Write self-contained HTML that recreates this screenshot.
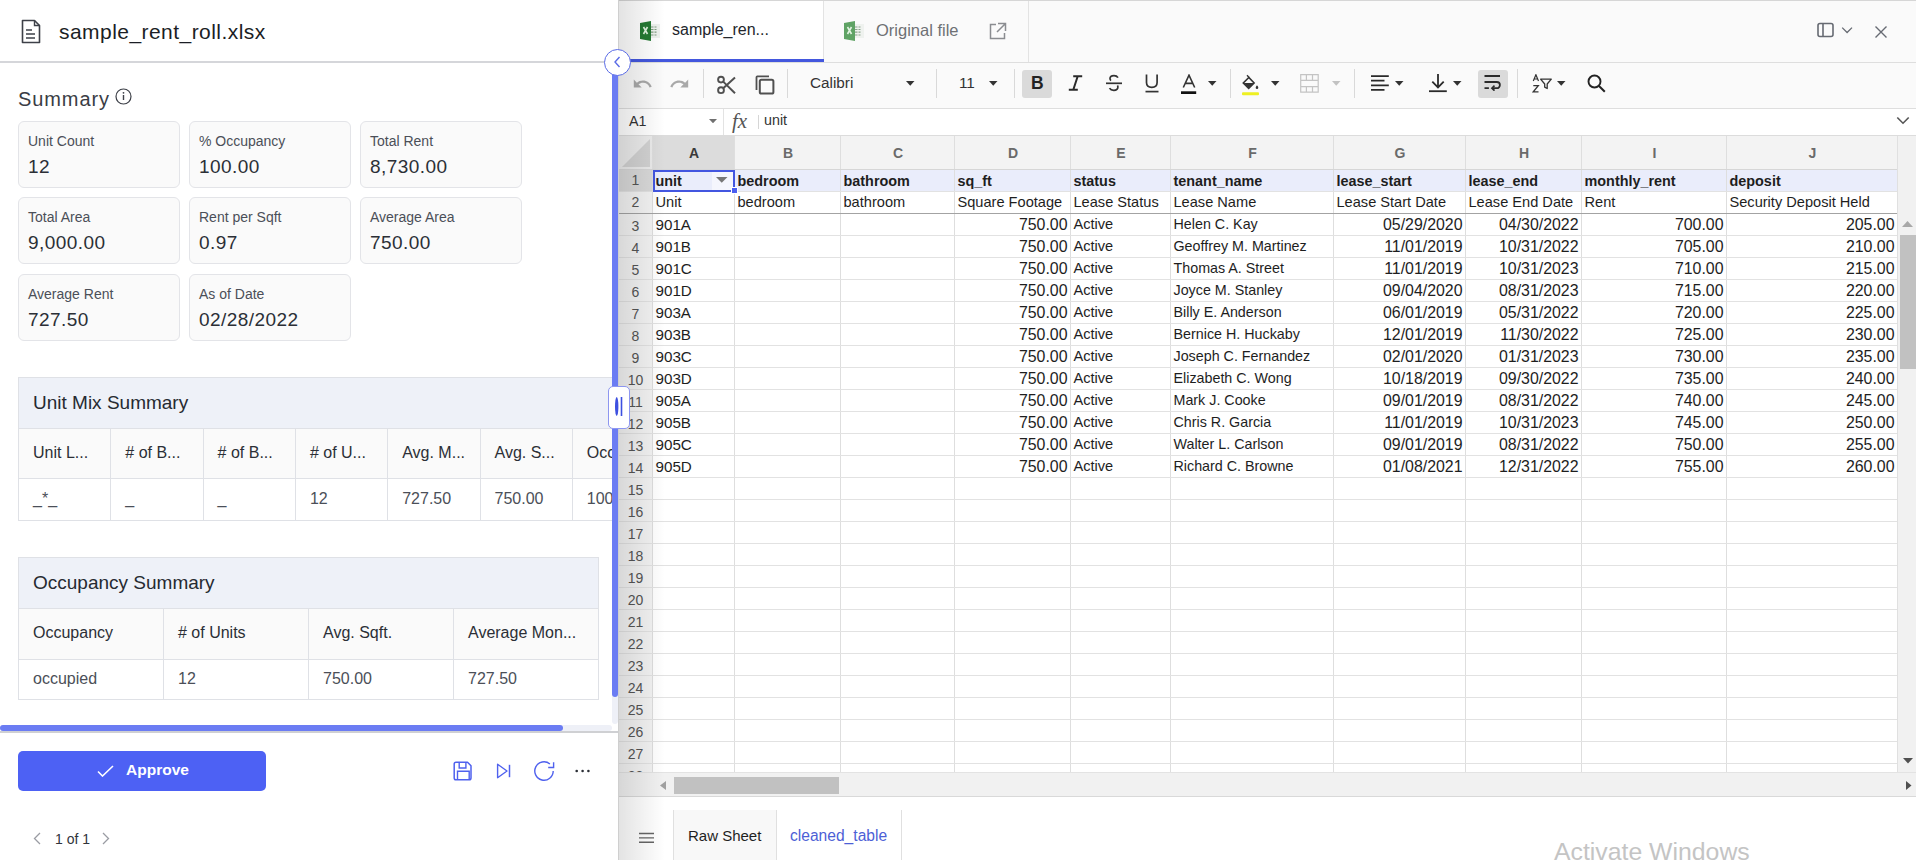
<!DOCTYPE html><html><head><meta charset="utf-8"><style>

*{box-sizing:border-box;margin:0;padding:0}
html,body{width:1916px;height:860px;overflow:hidden;background:#fff;font-family:"Liberation Sans",sans-serif;color:#1f2329}
.abs{position:absolute}
.t{position:absolute;white-space:nowrap}
.card{position:absolute;width:162px;height:67px;border:1px solid #e3e4e8;border-radius:6px;background:#fafafa}
.card .l{position:absolute;left:9px;top:11px;font-size:14px;color:#4b4f58;white-space:nowrap}
.card .v{position:absolute;left:9px;top:34px;font-size:19px;letter-spacing:0.45px;color:#2b2f36;white-space:nowrap}
.cell{position:absolute;white-space:nowrap;overflow:hidden;color:#222}

</style></head><body>
<div class="abs" style="left:0;top:0;width:612px;height:860px;background:#fff;overflow:hidden">
<svg class="abs" style="left:21px;top:19px" width="21" height="25" viewBox="0 0 21 25"><path d="M1.5 1.5h12l5 5v17h-17z" fill="none" stroke="#3d4048" stroke-width="1.6" stroke-linejoin="round"/><path d="M13.5 1.5v5h5" fill="none" stroke="#3d4048" stroke-width="1.4"/><path d="M5 11h6M5 15h9M5 19h9" stroke="#3d4048" stroke-width="1.4"/></svg>
<div class="t" style="left:59px;top:20px;font-size:21px;letter-spacing:0.45px;color:#1b1e25">sample_rent_roll.xlsx</div>
<div class="abs" style="left:0;top:61px;width:612px;height:2px;background:#d5d6da"></div>
<div class="t" style="left:18px;top:88px;font-size:20px;letter-spacing:0.9px;color:#3a3d45">Summary</div>
<svg class="abs" style="left:115px;top:88px" width="17" height="17" viewBox="0 0 17 17"><circle cx="8.5" cy="8.5" r="7.5" fill="none" stroke="#3d4048" stroke-width="1.2"/><path d="M8.5 7v5" stroke="#3d4048" stroke-width="1.4"/><circle cx="8.5" cy="4.8" r="0.9" fill="#3d4048"/></svg>
<div class="card" style="left:18px;top:121px"><div class="l">Unit Count</div><div class="v">12</div></div>
<div class="card" style="left:189px;top:121px"><div class="l">% Occupancy</div><div class="v">100.00</div></div>
<div class="card" style="left:360px;top:121px"><div class="l">Total Rent</div><div class="v">8,730.00</div></div>
<div class="card" style="left:18px;top:197px"><div class="l">Total Area</div><div class="v">9,000.00</div></div>
<div class="card" style="left:189px;top:197px"><div class="l">Rent per Sqft</div><div class="v">0.97</div></div>
<div class="card" style="left:360px;top:197px"><div class="l">Average Area</div><div class="v">750.00</div></div>
<div class="card" style="left:18px;top:274px"><div class="l">Average Rent</div><div class="v">727.50</div></div>
<div class="card" style="left:189px;top:274px"><div class="l">As of Date</div><div class="v">02/28/2022</div></div>
<div class="abs" style="left:18px;top:377px;width:620px;height:144px;border:1px solid #dfe1e6;background:#fff">
<div class="abs" style="left:0;top:0;width:620px;height:51px;background:#eef1f8;border-bottom:1px solid #dfe1e6"></div>
<div class="t" style="left:14px;top:14px;font-size:19px;color:#262a31">Unit Mix Summary</div>
<div class="abs" style="left:0;top:51px;width:620px;height:50px;background:#fafafa;border-bottom:1px solid #dfe1e6"></div>
<div class="t" style="left:14.0px;top:66px;font-size:16px;color:#2b2f36">Unit L...</div>
<div class="t" style="left:14.0px;top:112px;font-size:16px;color:#4b4f58">_*_</div>
<div class="abs" style="left:91.3px;top:51px;width:1px;height:92px;background:#dfe1e6"></div>
<div class="t" style="left:106.3px;top:66px;font-size:16px;color:#2b2f36"># of B...</div>
<div class="t" style="left:106.3px;top:112px;font-size:16px;color:#4b4f58">_</div>
<div class="abs" style="left:183.6px;top:51px;width:1px;height:92px;background:#dfe1e6"></div>
<div class="t" style="left:198.6px;top:66px;font-size:16px;color:#2b2f36"># of B...</div>
<div class="t" style="left:198.6px;top:112px;font-size:16px;color:#4b4f58">_</div>
<div class="abs" style="left:275.9px;top:51px;width:1px;height:92px;background:#dfe1e6"></div>
<div class="t" style="left:290.9px;top:66px;font-size:16px;color:#2b2f36"># of U...</div>
<div class="t" style="left:290.9px;top:112px;font-size:16px;color:#4b4f58">12</div>
<div class="abs" style="left:368.2px;top:51px;width:1px;height:92px;background:#dfe1e6"></div>
<div class="t" style="left:383.2px;top:66px;font-size:16px;color:#2b2f36">Avg. M...</div>
<div class="t" style="left:383.2px;top:112px;font-size:16px;color:#4b4f58">727.50</div>
<div class="abs" style="left:460.5px;top:51px;width:1px;height:92px;background:#dfe1e6"></div>
<div class="t" style="left:475.5px;top:66px;font-size:16px;color:#2b2f36">Avg. S...</div>
<div class="t" style="left:475.5px;top:112px;font-size:16px;color:#4b4f58">750.00</div>
<div class="abs" style="left:552.8px;top:51px;width:1px;height:92px;background:#dfe1e6"></div>
<div class="t" style="left:567.8px;top:66px;font-size:16px;color:#2b2f36">Occupancy</div>
<div class="t" style="left:567.8px;top:112px;font-size:16px;color:#4b4f58">100.00</div>
</div>
<div class="abs" style="left:18px;top:557px;width:581px;height:143px;border:1px solid #dfe1e6;background:#fff">
<div class="abs" style="left:0;top:0;width:579px;height:51px;background:#eef1f8;border-bottom:1px solid #dfe1e6"></div>
<div class="t" style="left:14px;top:14px;font-size:19px;color:#262a31">Occupancy Summary</div>
<div class="abs" style="left:0;top:51px;width:579px;height:51px;background:#fafafa;border-bottom:1px solid #dfe1e6"></div>
<div class="t" style="left:14px;top:66px;font-size:16px;color:#2b2f36">Occupancy</div>
<div class="t" style="left:14px;top:112px;font-size:16px;color:#4b4f58">occupied</div>
<div class="abs" style="left:144px;top:51px;width:1px;height:91px;background:#dfe1e6"></div>
<div class="t" style="left:159px;top:66px;font-size:16px;color:#2b2f36"># of Units</div>
<div class="t" style="left:159px;top:112px;font-size:16px;color:#4b4f58">12</div>
<div class="abs" style="left:289px;top:51px;width:1px;height:91px;background:#dfe1e6"></div>
<div class="t" style="left:304px;top:66px;font-size:16px;color:#2b2f36">Avg. Sqft.</div>
<div class="t" style="left:304px;top:112px;font-size:16px;color:#4b4f58">750.00</div>
<div class="abs" style="left:434px;top:51px;width:1px;height:91px;background:#dfe1e6"></div>
<div class="t" style="left:449px;top:66px;font-size:16px;color:#2b2f36">Average Mon...</div>
<div class="t" style="left:449px;top:112px;font-size:16px;color:#4b4f58">727.50</div>
</div>
<div class="abs" style="left:0;top:725px;width:612px;height:6px;background:#eef0f7;border-radius:3px"></div>
<div class="abs" style="left:0;top:725px;width:563px;height:6px;background:#6b7cf3;border-radius:3px"></div>
<div class="abs" style="left:18px;top:751px;width:248px;height:40px;background:#4d61f4;border-radius:5px"></div>
<svg class="abs" style="left:97px;top:765px" width="17" height="12" viewBox="0 0 17 12"><path d="M1 6.5l4.5 4.5L16 1" fill="none" stroke="#fff" stroke-width="1.6"/></svg>
<div class="t" style="left:126px;top:761px;font-size:15.5px;font-weight:bold;color:#fff">Approve</div>
<svg class="abs" style="left:453px;top:761px" width="20" height="20" viewBox="0 0 20 20"><path d="M3 1.2h11.5l3.5 3.5V17a1.8 1.8 0 0 1-1.8 1.8H3A1.8 1.8 0 0 1 1.2 17V3A1.8 1.8 0 0 1 3 1.2z" fill="none" stroke="#4f61ee" stroke-width="1.5" stroke-linejoin="round"/><path d="M6.2 1.2v5.8h6.7V1.2M4.5 18.8v-8.5h11.7v8.5" fill="none" stroke="#4f61ee" stroke-width="1.4"/></svg>
<svg class="abs" style="left:496px;top:763px" width="16" height="16" viewBox="0 0 16 16"><path d="M1.6 1.3l9.4 6.7-9.4 6.7z" fill="none" stroke="#4f61ee" stroke-width="1.4" stroke-linejoin="round"/><path d="M13.5 1.8v12.4" stroke="#4f61ee" stroke-width="1.5"/></svg>
<svg class="abs" style="left:533px;top:760px" width="22" height="22" viewBox="0 0 22 22"><path d="M20.2 11a9.2 9.2 0 1 1-3.3-7.05" fill="none" stroke="#4f61ee" stroke-width="1.4"/><path d="M20.6 2.3v5.2h-5.4" fill="none" stroke="#4f61ee" stroke-width="1.4"/></svg>
<svg class="abs" style="left:575px;top:769px" width="16" height="4" viewBox="0 0 16 4"><circle cx="1.7" cy="2" r="1.3" fill="#2b2f36"/><circle cx="7.6" cy="2" r="1.3" fill="#2b2f36"/><circle cx="13.4" cy="2" r="1.3" fill="#2b2f36"/></svg>
<svg class="abs" style="left:33px;top:832px" width="8" height="13" viewBox="0 0 8 13"><path d="M7 1L1.5 6.5 7 12" fill="none" stroke="#9a9ca3" stroke-width="1.3"/></svg>
<div class="t" style="left:55px;top:831px;font-size:14px;color:#30343b">1 of 1</div>
<svg class="abs" style="left:102px;top:832px" width="8" height="13" viewBox="0 0 8 13"><path d="M1 1l5.5 5.5L1 12" fill="none" stroke="#9a9ca3" stroke-width="1.3"/></svg>
</div>
<div class="abs" style="left:0;top:731px;width:618px;height:1.5px;background:#cfd0d3"></div>
<div class="abs" style="left:612px;top:62px;width:6px;height:662px;background:#eef0f7;border-radius:3px"></div>
<div class="abs" style="left:612px;top:62px;width:6px;height:635px;background:#6b7cf3;border-radius:0 0 3px 3px"></div>
<div class="abs" style="left:618px;top:0;width:1298px;height:860px;background:#fafafa;overflow:hidden">
<div class="abs" style="left:0;top:0;width:1298px;height:1px;background:#d6d6d6"></div>
<div class="abs" style="left:0;top:0;width:1px;height:860px;background:#d6d6d6"></div>
<div class="abs" style="left:1px;top:1px;width:204px;height:61px;background:#fff"></div>
<div class="abs" style="left:205px;top:1px;width:1px;height:61px;background:#e3e3e3"></div>
<div class="abs" style="left:410px;top:1px;width:1px;height:61px;background:#e3e3e3"></div>
<div class="abs" style="left:0;top:62px;width:1298px;height:1px;background:#dedede"></div>
<div class="abs" style="left:0;top:59px;width:206px;height:3px;background:#4357de"></div>
<svg class="abs" style="left:22px;top:21px;opacity:1" width="21" height="21" viewBox="0 0 21 21"><rect x="11" y="3" width="9" height="14" fill="#eef2ee"/><path d="M11 6h2.5M14.5 6h2M11 8.5h2.5M14.5 8.5h2M11 11.2h2.5M14.5 11.2h2M11 14h2.5M14.5 14h2" stroke="#7f9c80" stroke-width="1.2"/><path d="M0 2l11-2v20L0 18z" fill="#247a33"/><path d="M3.5 6l4 7M7.5 6l-4 7" stroke="#dff3df" stroke-width="1.6"/></svg>
<div class="t" style="left:54px;top:21px;font-size:16px;color:#23262c">sample_ren...</div>
<svg class="abs" style="left:226px;top:21px;opacity:0.9" width="21" height="21" viewBox="0 0 21 21"><rect x="11" y="3" width="9" height="14" fill="#eef2ee"/><path d="M11 6h2.5M14.5 6h2M11 8.5h2.5M14.5 8.5h2M11 11.2h2.5M14.5 11.2h2M11 14h2.5M14.5 14h2" stroke="#7f9c80" stroke-width="1.2"/><path d="M0 2l11-2v20L0 18z" fill="#4f9a55"/><path d="M3.5 6l4 7M7.5 6l-4 7" stroke="#dff3df" stroke-width="1.6"/></svg>
<div class="t" style="left:258px;top:21px;font-size:16.5px;color:#6e7074">Original file</div>
<svg class="abs" style="left:370px;top:22px" width="19" height="19" viewBox="0 0 19 19"><path d="M8 2.5H2.5v14h14V11" fill="none" stroke="#8a8c90" stroke-width="1.5"/><path d="M10 1.5h7.5V9M17.5 1.5L9 10" fill="none" stroke="#8a8c90" stroke-width="1.5"/></svg>
<svg class="abs" style="left:1198.7px;top:22px" width="38" height="16" viewBox="0 0 38 16"><rect x="1" y="1.5" width="15" height="13" rx="2" fill="none" stroke="#666a72" stroke-width="1.6"/><path d="M6 1.5v13" stroke="#666a72" stroke-width="1.6"/><path d="M25.2 5.6l4.9 4.9 4.9-4.9" fill="none" stroke="#666a72" stroke-width="1.3"/></svg>
<svg class="abs" style="left:1256px;top:25px" width="14" height="14" viewBox="0 0 14 14"><path d="M1.5 1.5l11 11M12.5 1.5l-11 11" stroke="#666a72" stroke-width="1.4"/></svg>
<div class="abs" style="left:0;top:108px;width:1298px;height:1px;background:#dedede"></div>
</div>
<svg class="abs" style="left:632px;top:76px" width="20" height="15" viewBox="0 0 20 15"><path d="M10.9 4.5c-2.3 0-4.4.9-6 2.3L1.8 3.6v7.9h7.9L6.5 8.3c1.2-1 2.8-1.6 4.5-1.6 3.1 0 5.7 2 6.6 4.8l2.1-.7C18.5 7.2 15 4.5 10.9 4.5z" fill="#a9a9a9"/></svg>
<svg class="abs" style="left:670px;top:76px" width="20" height="15" viewBox="0 0 20 15"><g transform="translate(20,0) scale(-1,1)"><path d="M10.9 4.5c-2.3 0-4.4.9-6 2.3L1.8 3.6v7.9h7.9L6.5 8.3c1.2-1 2.8-1.6 4.5-1.6 3.1 0 5.7 2 6.6 4.8l2.1-.7C18.5 7.2 15 4.5 10.9 4.5z" fill="#a9a9a9"/></g></svg>
<div class="abs" style="left:703px;top:69px;width:1px;height:29px;background:#d9d9d9;"></div>
<svg class="abs" style="left:716px;top:75px" width="21" height="20" viewBox="0 0 21 20"><circle cx="5" cy="4.6" r="2.9" fill="none" stroke="#505050" stroke-width="1.9"/><circle cx="5" cy="15.2" r="2.9" fill="none" stroke="#505050" stroke-width="1.9"/><path d="M7.2 6.6L19 18.2M7.2 13.2L19 2.4" stroke="#505050" stroke-width="2"/></svg>
<svg class="abs" style="left:755px;top:75px" width="20" height="20" viewBox="0 0 20 20"><path d="M1.5 15V2.2c0-.5.3-.8.8-.8H14" fill="none" stroke="#505050" stroke-width="1.8"/><rect x="4.8" y="4.8" width="13.6" height="13.8" rx="1.6" fill="none" stroke="#505050" stroke-width="2"/></svg>
<div class="abs" style="left:787px;top:69px;width:1px;height:29px;background:#d9d9d9;"></div>
<div class="t" style="left:810px;top:74px;font-size:15.3px;color:#333;">Calibri</div>
<svg class="abs" style="left:906px;top:81px" width="8.5" height="4.7" viewBox="0 0 8.5 4.7"><path d="M0 0H8.5L4.25 4.7z" fill="#333"/></svg>
<div class="abs" style="left:936px;top:69px;width:1px;height:29px;background:#d9d9d9;"></div>
<div class="t" style="left:959px;top:74px;font-size:15.3px;color:#333;">11</div>
<svg class="abs" style="left:989px;top:81px" width="8.5" height="4.7" viewBox="0 0 8.5 4.7"><path d="M0 0H8.5L4.25 4.7z" fill="#333"/></svg>
<div class="abs" style="left:1014px;top:69px;width:1px;height:29px;background:#d9d9d9;"></div>
<div class="abs" style="left:1022px;top:70px;width:30px;height:28px;background:#dadada;border-radius:3px"></div>
<div class="t" style="left:1031px;top:73px;font-size:17.5px;color:#222;font-weight:bold">B</div>
<svg class="abs" style="left:1068px;top:75px" width="15" height="16" viewBox="0 0 15 16"><path d="M5.2 1.2h9M0.8 14.8h9M9.7 1.2L5.3 14.8" fill="none" stroke="#2a2a2a" stroke-width="2"/></svg>
<svg class="abs" style="left:1105px;top:74px" width="18" height="18" viewBox="0 0 18 18"><path d="M13 3.6c-.8-1.3-2.2-2-4-2-2.4 0-4 1.2-4 3 0 .8.3 1.5 1 2" fill="none" stroke="#333" stroke-width="1.7"/><path d="M1 9.3h16" stroke="#333" stroke-width="1.7"/><path d="M12.4 11.5c.3.4.5.9.5 1.5 0 2-1.7 3.3-4.1 3.3-2 0-3.5-.8-4.3-2.2" fill="none" stroke="#333" stroke-width="1.7"/></svg>
<svg class="abs" style="left:1144px;top:73px" width="16" height="20" viewBox="0 0 16 20"><path d="M2.5 1.5v8c0 3 2 4.8 5.3 4.8s5.3-1.8 5.3-4.8v-8" fill="none" stroke="#333" stroke-width="1.7"/><path d="M1.5 18.6h13" stroke="#333" stroke-width="1.7"/></svg>
<svg class="abs" style="left:1181px;top:74px" width="16" height="21" viewBox="0 0 16 21"><path d="M2.3 13.5L8 1.2l5.7 12.3M4.2 9.4h7.6" fill="none" stroke="#333" stroke-width="1.6"/><rect x="0" y="17.3" width="15.2" height="2.7" fill="#111"/></svg>
<svg class="abs" style="left:1208px;top:81px" width="8.5" height="4.7" viewBox="0 0 8.5 4.7"><path d="M0 0H8.5L4.25 4.7z" fill="#333"/></svg>
<div class="abs" style="left:1230px;top:69px;width:1px;height:29px;background:#d9d9d9;"></div>
<svg class="abs" style="left:1242px;top:74px" width="18" height="22" viewBox="0 0 18 22"><path d="M5 1.3l2.1 2.1" stroke="#333" stroke-width="1.4"/><path d="M6.8 3.5L1.3 8.9l5.4 5.4 5.4-5.4z" fill="none" stroke="#333" stroke-width="1.6"/><path d="M1.8 8.9h10l-5.1 5.1z" fill="#333"/><path d="M15 11.3c.8 1 1.3 1.8 1.3 2.4a1.3 1.3 0 0 1-2.6 0c0-.6.5-1.4 1.3-2.4z" fill="#333"/><rect x="0" y="18.3" width="17" height="3" rx="1" fill="#eef022"/></svg>
<svg class="abs" style="left:1271px;top:81px" width="8.5" height="4.7" viewBox="0 0 8.5 4.7"><path d="M0 0H8.5L4.25 4.7z" fill="#333"/></svg>
<svg class="abs" style="left:1300px;top:74px" width="19" height="19" viewBox="0 0 19 19"><path d="M.7 .7h17.5v17.5H.7zM.7 6.3h17.5M.7 12.6h17.5M6.4 .7v5.6M12.5 .7v5.6M6.4 12.6v5.6M12.5 12.6v5.6" fill="none" stroke="#c4c4c4" stroke-width="1.2"/></svg>
<svg class="abs" style="left:1332px;top:81px" width="8.5" height="4.7" viewBox="0 0 8.5 4.7"><path d="M0 0H8.5L4.25 4.7z" fill="#c2c2c2"/></svg>
<div class="abs" style="left:1354px;top:69px;width:1px;height:29px;background:#d9d9d9;"></div>
<svg class="abs" style="left:1370px;top:75px" width="20" height="16" viewBox="0 0 20 16"><path d="M1 1.2h17.8M1 5.6h13.5M1 10.3h17.8M1 14.8h13.5" stroke="#2a2a2a" stroke-width="1.7"/></svg>
<svg class="abs" style="left:1395px;top:81px" width="8.5" height="4.7" viewBox="0 0 8.5 4.7"><path d="M0 0H8.5L4.25 4.7z" fill="#333"/></svg>
<svg class="abs" style="left:1428px;top:73px" width="20" height="20" viewBox="0 0 20 20"><path d="M10 1v13M4.3 8.7l5.7 5.7 5.7-5.7" fill="none" stroke="#2a2a2a" stroke-width="1.8"/><path d="M1 18.2h17.8" stroke="#2a2a2a" stroke-width="1.8"/></svg>
<svg class="abs" style="left:1453px;top:81px" width="8.5" height="4.7" viewBox="0 0 8.5 4.7"><path d="M0 0H8.5L4.25 4.7z" fill="#333"/></svg>
<div class="abs" style="left:1478px;top:70px;width:30px;height:28px;background:#dadada;border-radius:3px"></div>
<svg class="abs" style="left:1483px;top:74px" width="20" height="17" viewBox="0 0 20 17"><path d="M1.5 2h15.5M1.5 8h12.3a3.1 3.1 0 0 1 0 6.2H9.5M1.5 14.2h4.4" fill="none" stroke="#2a2a2a" stroke-width="1.8"/><path d="M11.5 11.7l-2.6 2.5 2.6 2.5" fill="none" stroke="#2a2a2a" stroke-width="1.6"/></svg>
<div class="abs" style="left:1517px;top:69px;width:1px;height:29px;background:#d9d9d9;"></div>
<svg class="abs" style="left:1532px;top:74px" width="21" height="19" viewBox="0 0 21 19"><path d="M1.3 7l2.6-6.3L6.5 7M2.1 5h3.6" fill="none" stroke="#333" stroke-width="1.2"/><path d="M1.3 11.7h5L1.3 17.8h5.2" fill="none" stroke="#333" stroke-width="1.3"/><path d="M8.6 5.2h10.7l-4.1 4.8v4.5l-2.5-1.3v-3.2z" fill="none" stroke="#333" stroke-width="1.3" stroke-linejoin="round"/></svg>
<svg class="abs" style="left:1557px;top:81px" width="8.5" height="4.7" viewBox="0 0 8.5 4.7"><path d="M0 0H8.5L4.25 4.7z" fill="#333"/></svg>
<svg class="abs" style="left:1587px;top:74px" width="20" height="19" viewBox="0 0 20 19"><circle cx="7.5" cy="7.5" r="6" fill="none" stroke="#222" stroke-width="1.9"/><path d="M12 12l5.8 5.8" stroke="#222" stroke-width="2"/></svg>
<div class="abs" style="left:619px;top:109px;width:1297px;height:26px;background:#fff;"></div>
<div class="abs" style="left:618px;top:135px;width:1298px;height:1px;background:#dcdcdc;"></div>
<div class="t" style="left:629px;top:113px;font-size:14.3px;color:#333;">A1</div>
<svg class="abs" style="left:708.5px;top:119px" width="8" height="4.3" viewBox="0 0 8 4.3"><path d="M0 0H8L4.0 4.3z" fill="#707070"/></svg>
<div class="abs" style="left:723px;top:109px;width:1px;height:26px;background:#e3e3e3;"></div>
<div class="t" style="left:732px;top:109px;font-size:21px;color:#555;font-family:'Liberation Serif',serif;font-style:italic">fx</div>
<div class="abs" style="left:758px;top:115px;width:1px;height:14px;background:#d6d6d6;"></div>
<div class="t" style="left:764px;top:112px;font-size:14.3px;color:#333;">unit</div>
<svg class="abs" style="left:1896px;top:116px" width="14" height="9" viewBox="0 0 14 9"><path d="M1.3 1.5l5.7 5.7 5.7-5.7" fill="none" stroke="#555" stroke-width="1.6"/></svg>
<div class="abs" style="left:619px;top:136px;width:1278px;height:34px;background:#f3f3f3;"></div>
<div class="abs" style="left:652px;top:136px;width:82px;height:34px;background:#dcdcdc;"></div>
<svg class="abs" style="left:619px;top:136px" width="33" height="33" viewBox="0 0 33 33"><rect width="33" height="33" fill="#ebebeb"/><path d="M3 31H31V3z" fill="#d2d2d2"/></svg>
<div class="abs" style="left:652px;top:169px;width:1245px;height:603px;background:#fff;"></div>
<div class="abs" style="left:619px;top:169px;width:33px;height:603px;background:#f3f3f3;"></div>
<div class="abs" style="left:619px;top:169px;width:33px;height:22px;background:#d9d9d9;"></div>
<div class="abs" style="left:652px;top:169px;width:1245px;height:22px;background:#eaedfb;"></div>
<div class="t" style="left:653px;top:144.5px;width:82px;text-align:center;font-size:14px;font-weight:bold;color:#3a3a3a">A</div>
<div class="t" style="left:735px;top:144.5px;width:106px;text-align:center;font-size:14px;font-weight:bold;color:#6a6a6a">B</div>
<div class="t" style="left:841px;top:144.5px;width:114px;text-align:center;font-size:14px;font-weight:bold;color:#6a6a6a">C</div>
<div class="t" style="left:955px;top:144.5px;width:116px;text-align:center;font-size:14px;font-weight:bold;color:#6a6a6a">D</div>
<div class="t" style="left:1071px;top:144.5px;width:100px;text-align:center;font-size:14px;font-weight:bold;color:#6a6a6a">E</div>
<div class="t" style="left:1171px;top:144.5px;width:163px;text-align:center;font-size:14px;font-weight:bold;color:#6a6a6a">F</div>
<div class="t" style="left:1334px;top:144.5px;width:132px;text-align:center;font-size:14px;font-weight:bold;color:#6a6a6a">G</div>
<div class="t" style="left:1466px;top:144.5px;width:116px;text-align:center;font-size:14px;font-weight:bold;color:#6a6a6a">H</div>
<div class="t" style="left:1582px;top:144.5px;width:145px;text-align:center;font-size:14px;font-weight:bold;color:#6a6a6a">I</div>
<div class="t" style="left:1727px;top:144.5px;width:171px;text-align:center;font-size:14px;font-weight:bold;color:#6a6a6a">J</div>
<div class="abs" style="left:652px;top:136px;width:1px;height:636px;background:#dedede;"></div>
<div class="abs" style="left:734px;top:136px;width:1px;height:636px;background:#dedede;"></div>
<div class="abs" style="left:840px;top:136px;width:1px;height:636px;background:#dedede;"></div>
<div class="abs" style="left:954px;top:136px;width:1px;height:636px;background:#dedede;"></div>
<div class="abs" style="left:1070px;top:136px;width:1px;height:636px;background:#dedede;"></div>
<div class="abs" style="left:1170px;top:136px;width:1px;height:636px;background:#dedede;"></div>
<div class="abs" style="left:1333px;top:136px;width:1px;height:636px;background:#dedede;"></div>
<div class="abs" style="left:1465px;top:136px;width:1px;height:636px;background:#dedede;"></div>
<div class="abs" style="left:1581px;top:136px;width:1px;height:636px;background:#dedede;"></div>
<div class="abs" style="left:1726px;top:136px;width:1px;height:636px;background:#dedede;"></div>
<div class="abs" style="left:1897px;top:136px;width:1px;height:636px;background:#dedede;"></div>
<div class="abs" style="left:618px;top:169px;width:1279px;height:1px;background:#d6d6d6;"></div>
<div class="abs" style="left:619px;top:191px;width:1278px;height:1px;background:#e2e2e2;"></div>
<div class="abs" style="left:619px;top:213px;width:1278px;height:1px;background:#a3a3a3;"></div>
<div class="abs" style="left:619px;top:235px;width:1278px;height:1px;background:#e2e2e2;"></div>
<div class="abs" style="left:619px;top:257px;width:1278px;height:1px;background:#e2e2e2;"></div>
<div class="abs" style="left:619px;top:279px;width:1278px;height:1px;background:#e2e2e2;"></div>
<div class="abs" style="left:619px;top:301px;width:1278px;height:1px;background:#e2e2e2;"></div>
<div class="abs" style="left:619px;top:323px;width:1278px;height:1px;background:#e2e2e2;"></div>
<div class="abs" style="left:619px;top:345px;width:1278px;height:1px;background:#e2e2e2;"></div>
<div class="abs" style="left:619px;top:367px;width:1278px;height:1px;background:#e2e2e2;"></div>
<div class="abs" style="left:619px;top:389px;width:1278px;height:1px;background:#e2e2e2;"></div>
<div class="abs" style="left:619px;top:411px;width:1278px;height:1px;background:#e2e2e2;"></div>
<div class="abs" style="left:619px;top:433px;width:1278px;height:1px;background:#e2e2e2;"></div>
<div class="abs" style="left:619px;top:455px;width:1278px;height:1px;background:#e2e2e2;"></div>
<div class="abs" style="left:619px;top:477px;width:1278px;height:1px;background:#e2e2e2;"></div>
<div class="abs" style="left:619px;top:499px;width:1278px;height:1px;background:#e2e2e2;"></div>
<div class="abs" style="left:619px;top:521px;width:1278px;height:1px;background:#e2e2e2;"></div>
<div class="abs" style="left:619px;top:543px;width:1278px;height:1px;background:#e2e2e2;"></div>
<div class="abs" style="left:619px;top:565px;width:1278px;height:1px;background:#e2e2e2;"></div>
<div class="abs" style="left:619px;top:587px;width:1278px;height:1px;background:#e2e2e2;"></div>
<div class="abs" style="left:619px;top:609px;width:1278px;height:1px;background:#e2e2e2;"></div>
<div class="abs" style="left:619px;top:631px;width:1278px;height:1px;background:#e2e2e2;"></div>
<div class="abs" style="left:619px;top:653px;width:1278px;height:1px;background:#e2e2e2;"></div>
<div class="abs" style="left:619px;top:675px;width:1278px;height:1px;background:#e2e2e2;"></div>
<div class="abs" style="left:619px;top:697px;width:1278px;height:1px;background:#e2e2e2;"></div>
<div class="abs" style="left:619px;top:719px;width:1278px;height:1px;background:#e2e2e2;"></div>
<div class="abs" style="left:619px;top:741px;width:1278px;height:1px;background:#e2e2e2;"></div>
<div class="abs" style="left:619px;top:763px;width:1278px;height:1px;background:#e2e2e2;"></div>
<div class="t" style="left:619px;top:171.5px;width:33px;text-align:center;font-size:14px;color:#555">1</div>
<div class="t" style="left:619px;top:193.5px;width:33px;text-align:center;font-size:14px;color:#555">2</div>
<div class="t" style="left:619px;top:218px;width:33px;text-align:center;font-size:14px;color:#555">3</div>
<div class="t" style="left:619px;top:240px;width:33px;text-align:center;font-size:14px;color:#555">4</div>
<div class="t" style="left:619px;top:262px;width:33px;text-align:center;font-size:14px;color:#555">5</div>
<div class="t" style="left:619px;top:284px;width:33px;text-align:center;font-size:14px;color:#555">6</div>
<div class="t" style="left:619px;top:306px;width:33px;text-align:center;font-size:14px;color:#555">7</div>
<div class="t" style="left:619px;top:328px;width:33px;text-align:center;font-size:14px;color:#555">8</div>
<div class="t" style="left:619px;top:350px;width:33px;text-align:center;font-size:14px;color:#555">9</div>
<div class="t" style="left:619px;top:372px;width:33px;text-align:center;font-size:14px;color:#555">10</div>
<div class="t" style="left:619px;top:394px;width:33px;text-align:center;font-size:14px;color:#555">11</div>
<div class="t" style="left:619px;top:416px;width:33px;text-align:center;font-size:14px;color:#555">12</div>
<div class="t" style="left:619px;top:438px;width:33px;text-align:center;font-size:14px;color:#555">13</div>
<div class="t" style="left:619px;top:460px;width:33px;text-align:center;font-size:14px;color:#555">14</div>
<div class="t" style="left:619px;top:482px;width:33px;text-align:center;font-size:14px;color:#555">15</div>
<div class="t" style="left:619px;top:504px;width:33px;text-align:center;font-size:14px;color:#555">16</div>
<div class="t" style="left:619px;top:526px;width:33px;text-align:center;font-size:14px;color:#555">17</div>
<div class="t" style="left:619px;top:548px;width:33px;text-align:center;font-size:14px;color:#555">18</div>
<div class="t" style="left:619px;top:570px;width:33px;text-align:center;font-size:14px;color:#555">19</div>
<div class="t" style="left:619px;top:592px;width:33px;text-align:center;font-size:14px;color:#555">20</div>
<div class="t" style="left:619px;top:614px;width:33px;text-align:center;font-size:14px;color:#555">21</div>
<div class="t" style="left:619px;top:636px;width:33px;text-align:center;font-size:14px;color:#555">22</div>
<div class="t" style="left:619px;top:658px;width:33px;text-align:center;font-size:14px;color:#555">23</div>
<div class="t" style="left:619px;top:680px;width:33px;text-align:center;font-size:14px;color:#555">24</div>
<div class="t" style="left:619px;top:702px;width:33px;text-align:center;font-size:14px;color:#555">25</div>
<div class="t" style="left:619px;top:724px;width:33px;text-align:center;font-size:14px;color:#555">26</div>
<div class="t" style="left:619px;top:746px;width:33px;text-align:center;font-size:14px;color:#555">27</div>
<div class="t" style="left:619px;top:768px;width:33px;text-align:center;font-size:14px;color:#555">28</div>
<div class="t" style="left:655.5px;top:173px;font-size:14.4px;font-weight:bold;color:#1e1e1e">unit</div>
<div class="t" style="left:655.5px;top:194px;font-size:14.6px;color:#1e1e1e">Unit</div>
<div class="t" style="left:737.5px;top:173px;font-size:14.4px;font-weight:bold;color:#1e1e1e">bedroom</div>
<div class="t" style="left:737.5px;top:194px;font-size:14.6px;color:#1e1e1e">bedroom</div>
<div class="t" style="left:843.5px;top:173px;font-size:14.4px;font-weight:bold;color:#1e1e1e">bathroom</div>
<div class="t" style="left:843.5px;top:194px;font-size:14.6px;color:#1e1e1e">bathroom</div>
<div class="t" style="left:957.5px;top:173px;font-size:14.4px;font-weight:bold;color:#1e1e1e">sq_ft</div>
<div class="t" style="left:957.5px;top:194px;font-size:14.6px;color:#1e1e1e">Square Footage</div>
<div class="t" style="left:1073.5px;top:173px;font-size:14.4px;font-weight:bold;color:#1e1e1e">status</div>
<div class="t" style="left:1073.5px;top:194px;font-size:14.6px;color:#1e1e1e">Lease Status</div>
<div class="t" style="left:1173.5px;top:173px;font-size:14.4px;font-weight:bold;color:#1e1e1e">tenant_name</div>
<div class="t" style="left:1173.5px;top:194px;font-size:14.6px;color:#1e1e1e">Lease Name</div>
<div class="t" style="left:1336.5px;top:173px;font-size:14.4px;font-weight:bold;color:#1e1e1e">lease_start</div>
<div class="t" style="left:1336.5px;top:194px;font-size:14.6px;color:#1e1e1e">Lease Start Date</div>
<div class="t" style="left:1468.5px;top:173px;font-size:14.4px;font-weight:bold;color:#1e1e1e">lease_end</div>
<div class="t" style="left:1468.5px;top:194px;font-size:14.6px;color:#1e1e1e">Lease End Date</div>
<div class="t" style="left:1584.5px;top:173px;font-size:14.4px;font-weight:bold;color:#1e1e1e">monthly_rent</div>
<div class="t" style="left:1584.5px;top:194px;font-size:14.6px;color:#1e1e1e">Rent</div>
<div class="t" style="left:1729.5px;top:173px;font-size:14.4px;font-weight:bold;color:#1e1e1e">deposit</div>
<div class="t" style="left:1729.5px;top:194px;font-size:14.6px;color:#1e1e1e">Security Deposit Held</div>
<div class="t" style="left:655.5px;top:216px;font-size:15.2px;color:#1e1e1e">901A</div>
<div class="t" style="left:954px;top:216px;width:113.5px;text-align:right;font-size:15.9px;color:#1e1e1e">750.00</div>
<div class="t" style="left:1073.5px;top:216px;font-size:14.6px;color:#1e1e1e">Active</div>
<div class="t" style="left:1173.5px;top:216px;font-size:14.3px;color:#1e1e1e">Helen C. Kay</div>
<div class="t" style="left:1333px;top:216px;width:129.5px;text-align:right;font-size:15.9px;color:#1e1e1e">05/29/2020</div>
<div class="t" style="left:1465px;top:216px;width:113.5px;text-align:right;font-size:15.9px;color:#1e1e1e">04/30/2022</div>
<div class="t" style="left:1581px;top:216px;width:142.5px;text-align:right;font-size:15.9px;color:#1e1e1e">700.00</div>
<div class="t" style="left:1726px;top:216px;width:168.5px;text-align:right;font-size:15.9px;color:#1e1e1e">205.00</div>
<div class="t" style="left:655.5px;top:238px;font-size:15.2px;color:#1e1e1e">901B</div>
<div class="t" style="left:954px;top:238px;width:113.5px;text-align:right;font-size:15.9px;color:#1e1e1e">750.00</div>
<div class="t" style="left:1073.5px;top:238px;font-size:14.6px;color:#1e1e1e">Active</div>
<div class="t" style="left:1173.5px;top:238px;font-size:14.3px;color:#1e1e1e">Geoffrey M. Martinez</div>
<div class="t" style="left:1333px;top:238px;width:129.5px;text-align:right;font-size:15.9px;color:#1e1e1e">11/01/2019</div>
<div class="t" style="left:1465px;top:238px;width:113.5px;text-align:right;font-size:15.9px;color:#1e1e1e">10/31/2022</div>
<div class="t" style="left:1581px;top:238px;width:142.5px;text-align:right;font-size:15.9px;color:#1e1e1e">705.00</div>
<div class="t" style="left:1726px;top:238px;width:168.5px;text-align:right;font-size:15.9px;color:#1e1e1e">210.00</div>
<div class="t" style="left:655.5px;top:260px;font-size:15.2px;color:#1e1e1e">901C</div>
<div class="t" style="left:954px;top:260px;width:113.5px;text-align:right;font-size:15.9px;color:#1e1e1e">750.00</div>
<div class="t" style="left:1073.5px;top:260px;font-size:14.6px;color:#1e1e1e">Active</div>
<div class="t" style="left:1173.5px;top:260px;font-size:14.3px;color:#1e1e1e">Thomas A. Street</div>
<div class="t" style="left:1333px;top:260px;width:129.5px;text-align:right;font-size:15.9px;color:#1e1e1e">11/01/2019</div>
<div class="t" style="left:1465px;top:260px;width:113.5px;text-align:right;font-size:15.9px;color:#1e1e1e">10/31/2023</div>
<div class="t" style="left:1581px;top:260px;width:142.5px;text-align:right;font-size:15.9px;color:#1e1e1e">710.00</div>
<div class="t" style="left:1726px;top:260px;width:168.5px;text-align:right;font-size:15.9px;color:#1e1e1e">215.00</div>
<div class="t" style="left:655.5px;top:282px;font-size:15.2px;color:#1e1e1e">901D</div>
<div class="t" style="left:954px;top:282px;width:113.5px;text-align:right;font-size:15.9px;color:#1e1e1e">750.00</div>
<div class="t" style="left:1073.5px;top:282px;font-size:14.6px;color:#1e1e1e">Active</div>
<div class="t" style="left:1173.5px;top:282px;font-size:14.3px;color:#1e1e1e">Joyce M. Stanley</div>
<div class="t" style="left:1333px;top:282px;width:129.5px;text-align:right;font-size:15.9px;color:#1e1e1e">09/04/2020</div>
<div class="t" style="left:1465px;top:282px;width:113.5px;text-align:right;font-size:15.9px;color:#1e1e1e">08/31/2023</div>
<div class="t" style="left:1581px;top:282px;width:142.5px;text-align:right;font-size:15.9px;color:#1e1e1e">715.00</div>
<div class="t" style="left:1726px;top:282px;width:168.5px;text-align:right;font-size:15.9px;color:#1e1e1e">220.00</div>
<div class="t" style="left:655.5px;top:304px;font-size:15.2px;color:#1e1e1e">903A</div>
<div class="t" style="left:954px;top:304px;width:113.5px;text-align:right;font-size:15.9px;color:#1e1e1e">750.00</div>
<div class="t" style="left:1073.5px;top:304px;font-size:14.6px;color:#1e1e1e">Active</div>
<div class="t" style="left:1173.5px;top:304px;font-size:14.3px;color:#1e1e1e">Billy E. Anderson</div>
<div class="t" style="left:1333px;top:304px;width:129.5px;text-align:right;font-size:15.9px;color:#1e1e1e">06/01/2019</div>
<div class="t" style="left:1465px;top:304px;width:113.5px;text-align:right;font-size:15.9px;color:#1e1e1e">05/31/2022</div>
<div class="t" style="left:1581px;top:304px;width:142.5px;text-align:right;font-size:15.9px;color:#1e1e1e">720.00</div>
<div class="t" style="left:1726px;top:304px;width:168.5px;text-align:right;font-size:15.9px;color:#1e1e1e">225.00</div>
<div class="t" style="left:655.5px;top:326px;font-size:15.2px;color:#1e1e1e">903B</div>
<div class="t" style="left:954px;top:326px;width:113.5px;text-align:right;font-size:15.9px;color:#1e1e1e">750.00</div>
<div class="t" style="left:1073.5px;top:326px;font-size:14.6px;color:#1e1e1e">Active</div>
<div class="t" style="left:1173.5px;top:326px;font-size:14.3px;color:#1e1e1e">Bernice H. Huckaby</div>
<div class="t" style="left:1333px;top:326px;width:129.5px;text-align:right;font-size:15.9px;color:#1e1e1e">12/01/2019</div>
<div class="t" style="left:1465px;top:326px;width:113.5px;text-align:right;font-size:15.9px;color:#1e1e1e">11/30/2022</div>
<div class="t" style="left:1581px;top:326px;width:142.5px;text-align:right;font-size:15.9px;color:#1e1e1e">725.00</div>
<div class="t" style="left:1726px;top:326px;width:168.5px;text-align:right;font-size:15.9px;color:#1e1e1e">230.00</div>
<div class="t" style="left:655.5px;top:348px;font-size:15.2px;color:#1e1e1e">903C</div>
<div class="t" style="left:954px;top:348px;width:113.5px;text-align:right;font-size:15.9px;color:#1e1e1e">750.00</div>
<div class="t" style="left:1073.5px;top:348px;font-size:14.6px;color:#1e1e1e">Active</div>
<div class="t" style="left:1173.5px;top:348px;font-size:14.3px;color:#1e1e1e">Joseph C. Fernandez</div>
<div class="t" style="left:1333px;top:348px;width:129.5px;text-align:right;font-size:15.9px;color:#1e1e1e">02/01/2020</div>
<div class="t" style="left:1465px;top:348px;width:113.5px;text-align:right;font-size:15.9px;color:#1e1e1e">01/31/2023</div>
<div class="t" style="left:1581px;top:348px;width:142.5px;text-align:right;font-size:15.9px;color:#1e1e1e">730.00</div>
<div class="t" style="left:1726px;top:348px;width:168.5px;text-align:right;font-size:15.9px;color:#1e1e1e">235.00</div>
<div class="t" style="left:655.5px;top:370px;font-size:15.2px;color:#1e1e1e">903D</div>
<div class="t" style="left:954px;top:370px;width:113.5px;text-align:right;font-size:15.9px;color:#1e1e1e">750.00</div>
<div class="t" style="left:1073.5px;top:370px;font-size:14.6px;color:#1e1e1e">Active</div>
<div class="t" style="left:1173.5px;top:370px;font-size:14.3px;color:#1e1e1e">Elizabeth C. Wong</div>
<div class="t" style="left:1333px;top:370px;width:129.5px;text-align:right;font-size:15.9px;color:#1e1e1e">10/18/2019</div>
<div class="t" style="left:1465px;top:370px;width:113.5px;text-align:right;font-size:15.9px;color:#1e1e1e">09/30/2022</div>
<div class="t" style="left:1581px;top:370px;width:142.5px;text-align:right;font-size:15.9px;color:#1e1e1e">735.00</div>
<div class="t" style="left:1726px;top:370px;width:168.5px;text-align:right;font-size:15.9px;color:#1e1e1e">240.00</div>
<div class="t" style="left:655.5px;top:392px;font-size:15.2px;color:#1e1e1e">905A</div>
<div class="t" style="left:954px;top:392px;width:113.5px;text-align:right;font-size:15.9px;color:#1e1e1e">750.00</div>
<div class="t" style="left:1073.5px;top:392px;font-size:14.6px;color:#1e1e1e">Active</div>
<div class="t" style="left:1173.5px;top:392px;font-size:14.3px;color:#1e1e1e">Mark J. Cooke</div>
<div class="t" style="left:1333px;top:392px;width:129.5px;text-align:right;font-size:15.9px;color:#1e1e1e">09/01/2019</div>
<div class="t" style="left:1465px;top:392px;width:113.5px;text-align:right;font-size:15.9px;color:#1e1e1e">08/31/2022</div>
<div class="t" style="left:1581px;top:392px;width:142.5px;text-align:right;font-size:15.9px;color:#1e1e1e">740.00</div>
<div class="t" style="left:1726px;top:392px;width:168.5px;text-align:right;font-size:15.9px;color:#1e1e1e">245.00</div>
<div class="t" style="left:655.5px;top:414px;font-size:15.2px;color:#1e1e1e">905B</div>
<div class="t" style="left:954px;top:414px;width:113.5px;text-align:right;font-size:15.9px;color:#1e1e1e">750.00</div>
<div class="t" style="left:1073.5px;top:414px;font-size:14.6px;color:#1e1e1e">Active</div>
<div class="t" style="left:1173.5px;top:414px;font-size:14.3px;color:#1e1e1e">Chris R. Garcia</div>
<div class="t" style="left:1333px;top:414px;width:129.5px;text-align:right;font-size:15.9px;color:#1e1e1e">11/01/2019</div>
<div class="t" style="left:1465px;top:414px;width:113.5px;text-align:right;font-size:15.9px;color:#1e1e1e">10/31/2023</div>
<div class="t" style="left:1581px;top:414px;width:142.5px;text-align:right;font-size:15.9px;color:#1e1e1e">745.00</div>
<div class="t" style="left:1726px;top:414px;width:168.5px;text-align:right;font-size:15.9px;color:#1e1e1e">250.00</div>
<div class="t" style="left:655.5px;top:436px;font-size:15.2px;color:#1e1e1e">905C</div>
<div class="t" style="left:954px;top:436px;width:113.5px;text-align:right;font-size:15.9px;color:#1e1e1e">750.00</div>
<div class="t" style="left:1073.5px;top:436px;font-size:14.6px;color:#1e1e1e">Active</div>
<div class="t" style="left:1173.5px;top:436px;font-size:14.3px;color:#1e1e1e">Walter L. Carlson</div>
<div class="t" style="left:1333px;top:436px;width:129.5px;text-align:right;font-size:15.9px;color:#1e1e1e">09/01/2019</div>
<div class="t" style="left:1465px;top:436px;width:113.5px;text-align:right;font-size:15.9px;color:#1e1e1e">08/31/2022</div>
<div class="t" style="left:1581px;top:436px;width:142.5px;text-align:right;font-size:15.9px;color:#1e1e1e">750.00</div>
<div class="t" style="left:1726px;top:436px;width:168.5px;text-align:right;font-size:15.9px;color:#1e1e1e">255.00</div>
<div class="t" style="left:655.5px;top:458px;font-size:15.2px;color:#1e1e1e">905D</div>
<div class="t" style="left:954px;top:458px;width:113.5px;text-align:right;font-size:15.9px;color:#1e1e1e">750.00</div>
<div class="t" style="left:1073.5px;top:458px;font-size:14.6px;color:#1e1e1e">Active</div>
<div class="t" style="left:1173.5px;top:458px;font-size:14.3px;color:#1e1e1e">Richard C. Browne</div>
<div class="t" style="left:1333px;top:458px;width:129.5px;text-align:right;font-size:15.9px;color:#1e1e1e">01/08/2021</div>
<div class="t" style="left:1465px;top:458px;width:113.5px;text-align:right;font-size:15.9px;color:#1e1e1e">12/31/2022</div>
<div class="t" style="left:1581px;top:458px;width:142.5px;text-align:right;font-size:15.9px;color:#1e1e1e">755.00</div>
<div class="t" style="left:1726px;top:458px;width:168.5px;text-align:right;font-size:15.9px;color:#1e1e1e">260.00</div>
<div class="abs" style="left:712px;top:170px;width:22px;height:21px;background:#f5f6fd;"></div>
<svg class="abs" style="left:716px;top:177px" width="11.5" height="5.7" viewBox="0 0 11.5 5.7"><path d="M0 0H11.5L5.75 5.7z" fill="#777"/></svg>
<div class="abs" style="left:653px;top:170px;width:82px;height:22px;border:2px solid #4356e0"></div>
<div class="abs" style="left:731px;top:187px;width:7px;height:7px;background:#4a5ef0;border:1px solid #fff"></div>
<div class="abs" style="left:1897px;top:136px;width:19px;height:636px;background:#f1f1f1;"></div>
<div class="abs" style="left:1897px;top:136px;width:1px;height:636px;background:#e0e0e0;"></div>
<svg class="abs" style="left:1902px;top:221px" width="11" height="6" viewBox="0 0 11 6"><path d="M0 6h11L5.5 0z" fill="#a8a8a8"/></svg>
<div class="abs" style="left:1900px;top:235px;width:16px;height:134px;background:#c1c1c1;"></div>
<svg class="abs" style="left:1903px;top:758px" width="10" height="5.5" viewBox="0 0 10 5.5"><path d="M0 0h10L5 5.5z" fill="#505050"/></svg>
<div class="abs" style="left:618px;top:772px;width:1298px;height:24px;background:#f1f1f1;"></div>
<div class="abs" style="left:618px;top:772px;width:1298px;height:1px;background:#e3e3e3;"></div>
<div class="abs" style="left:618px;top:796px;width:1298px;height:1px;background:#d9d9d9;"></div>
<svg class="abs" style="left:660px;top:781px" width="6" height="9" viewBox="0 0 6 9"><path d="M6 0v9L0 4.5z" fill="#a0a0a0"/></svg>
<div class="abs" style="left:674px;top:777px;width:165px;height:17px;background:#c1c1c1;"></div>
<svg class="abs" style="left:1906px;top:781px" width="5.5" height="9" viewBox="0 0 5.5 9"><path d="M0 0v9l5.5-4.5z" fill="#505050"/></svg>
<div class="abs" style="left:618px;top:797px;width:1298px;height:63px;background:#fff;"></div>
<svg class="abs" style="left:639px;top:832px" width="16" height="12" viewBox="0 0 16 12"><path d="M0 1.5h15M0 5.9h15M0 10.3h15" stroke="#666" stroke-width="1.4"/></svg>
<div class="abs" style="left:673px;top:810px;width:104px;height:50px;background:#f8f8f8;border-left:1px solid #e0e0e0"></div>
<div class="abs" style="left:776px;top:810px;width:1px;height:50px;background:#e0e0e0;"></div>
<div class="abs" style="left:901px;top:810px;width:1px;height:50px;background:#e0e0e0;"></div>
<div class="t" style="left:688px;top:827px;font-size:15px;color:#1f1f1f;">Raw Sheet</div>
<div class="t" style="left:790px;top:827px;font-size:15.6px;color:#4d5fd6;">cleaned_table</div>
<div class="t" style="left:1554px;top:838px;font-size:24.8px;color:#c4c4c4;">Activate Windows</div>
<div class="abs" style="left:619px;top:0;width:46px;height:860px;background:linear-gradient(to right,rgba(0,0,0,0.11),rgba(0,0,0,0))"></div>
<div class="abs" style="left:618px;top:0px;width:1px;height:860px;background:#cfcfcf;"></div>
<div class="abs" style="left:604px;top:49px;width:27px;height:27px;border-radius:50%;background:#fff;border:1.3px solid #5a6be6"></div>
<svg class="abs" style="left:612px;top:55px" width="10" height="14" viewBox="0 0 10 14"><path d="M7.5 2L3 7l4.5 5" fill="none" stroke="#5a6be6" stroke-width="1.4"/></svg>
<div class="abs" style="left:608px;top:386px;width:22px;height:43px;border-radius:5px;background:#fff;border:1px solid #8d96f0"></div>
<svg class="abs" style="left:614px;top:396px" width="10" height="21" viewBox="0 0 10 21"><ellipse cx="2.7" cy="10.5" rx="1.7" ry="9.5" fill="#3d50e0"/><path d="M7.5 1v19" stroke="#3d50e0" stroke-width="1.6"/></svg>
</body></html>
